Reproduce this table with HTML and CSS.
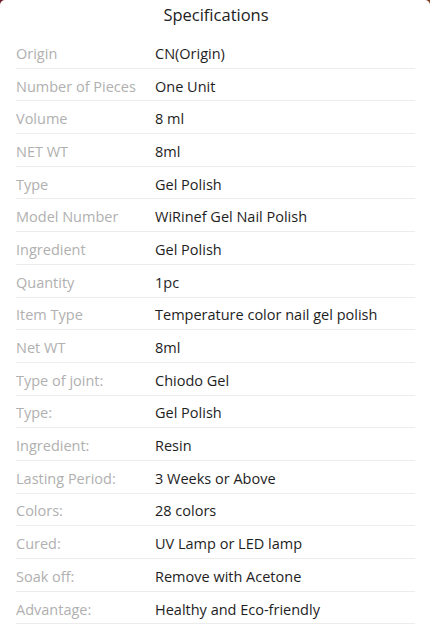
FILE: index.html
```html
<!DOCTYPE html>
<html>
<head>
<meta charset="utf-8">
<link rel="stylesheet" href="styles.css">
</head>
<body>
<div class="sheet">
  <h1 class="title">Specifications</h1>
  <div class="specs">
    <div class="row"><span class="label">Origin</span><span class="value">CN(Origin)</span></div>
    <div class="row"><span class="label">Number of Pieces</span><span class="value">One Unit</span></div>
    <div class="row"><span class="label">Volume</span><span class="value">8 ml</span></div>
    <div class="row"><span class="label">NET WT</span><span class="value">8ml</span></div>
    <div class="row"><span class="label">Type</span><span class="value">Gel Polish</span></div>
    <div class="row"><span class="label">Model Number</span><span class="value">WiRinef Gel Nail Polish</span></div>
    <div class="row"><span class="label">Ingredient</span><span class="value">Gel Polish</span></div>
    <div class="row"><span class="label">Quantity</span><span class="value">1pc</span></div>
    <div class="row"><span class="label">Item Type</span><span class="value">Temperature color nail gel polish</span></div>
    <div class="row"><span class="label">Net WT</span><span class="value">8ml</span></div>
    <div class="row"><span class="label">Type of joint:</span><span class="value">Chiodo Gel</span></div>
    <div class="row"><span class="label">Type:</span><span class="value">Gel Polish</span></div>
    <div class="row"><span class="label">Ingredient:</span><span class="value">Resin</span></div>
    <div class="row"><span class="label">Lasting Period:</span><span class="value">3 Weeks or Above</span></div>
    <div class="row"><span class="label">Colors:</span><span class="value">28 colors</span></div>
    <div class="row"><span class="label">Cured:</span><span class="value">UV Lamp or LED lamp</span></div>
    <div class="row"><span class="label">Soak off:</span><span class="value">Remove with Acetone</span></div>
    <div class="row"><span class="label">Advantage:</span><span class="value">Healthy and Eco-friendly</span></div>
  </div>
</div>
</body>
</html>
```
FILE: styles.css
```css
html, body {
  margin: 0;
  padding: 0;
}
body {
  background: linear-gradient(90deg, #6a1a2a 0%, #7a3a20 100%);
  font-family: "Open Sans", "Liberation Sans", sans-serif;
  width: 430px;
  height: 626px;
  overflow: hidden;
}
.sheet {
  background: #fff;
  border-radius: 5px 5px 0 0;
  height: 626px;
  padding: 0 15px 0 16px;
  box-sizing: border-box;
}
.title {
  margin: 0;
  height: 36px;
  font-size: 16.5px;
  font-weight: 400;
  color: #222;
  text-align: center;
  line-height: 29px;
  padding-left: 1px;
  box-sizing: border-box;
}
.specs {
  display: flex;
  flex-direction: column;
}
.row {
  display: flex;
  align-items: center;
  height: 32.7px;
  padding-top: 3px;
  box-sizing: border-box;
  border-bottom: 1px solid #ececec;
  font-size: 14.5px;
}
.label {
  width: 139px;
  flex: none;
  color: #b0b0b0;
}
.value {
  color: #1e1e1e;
}
```
